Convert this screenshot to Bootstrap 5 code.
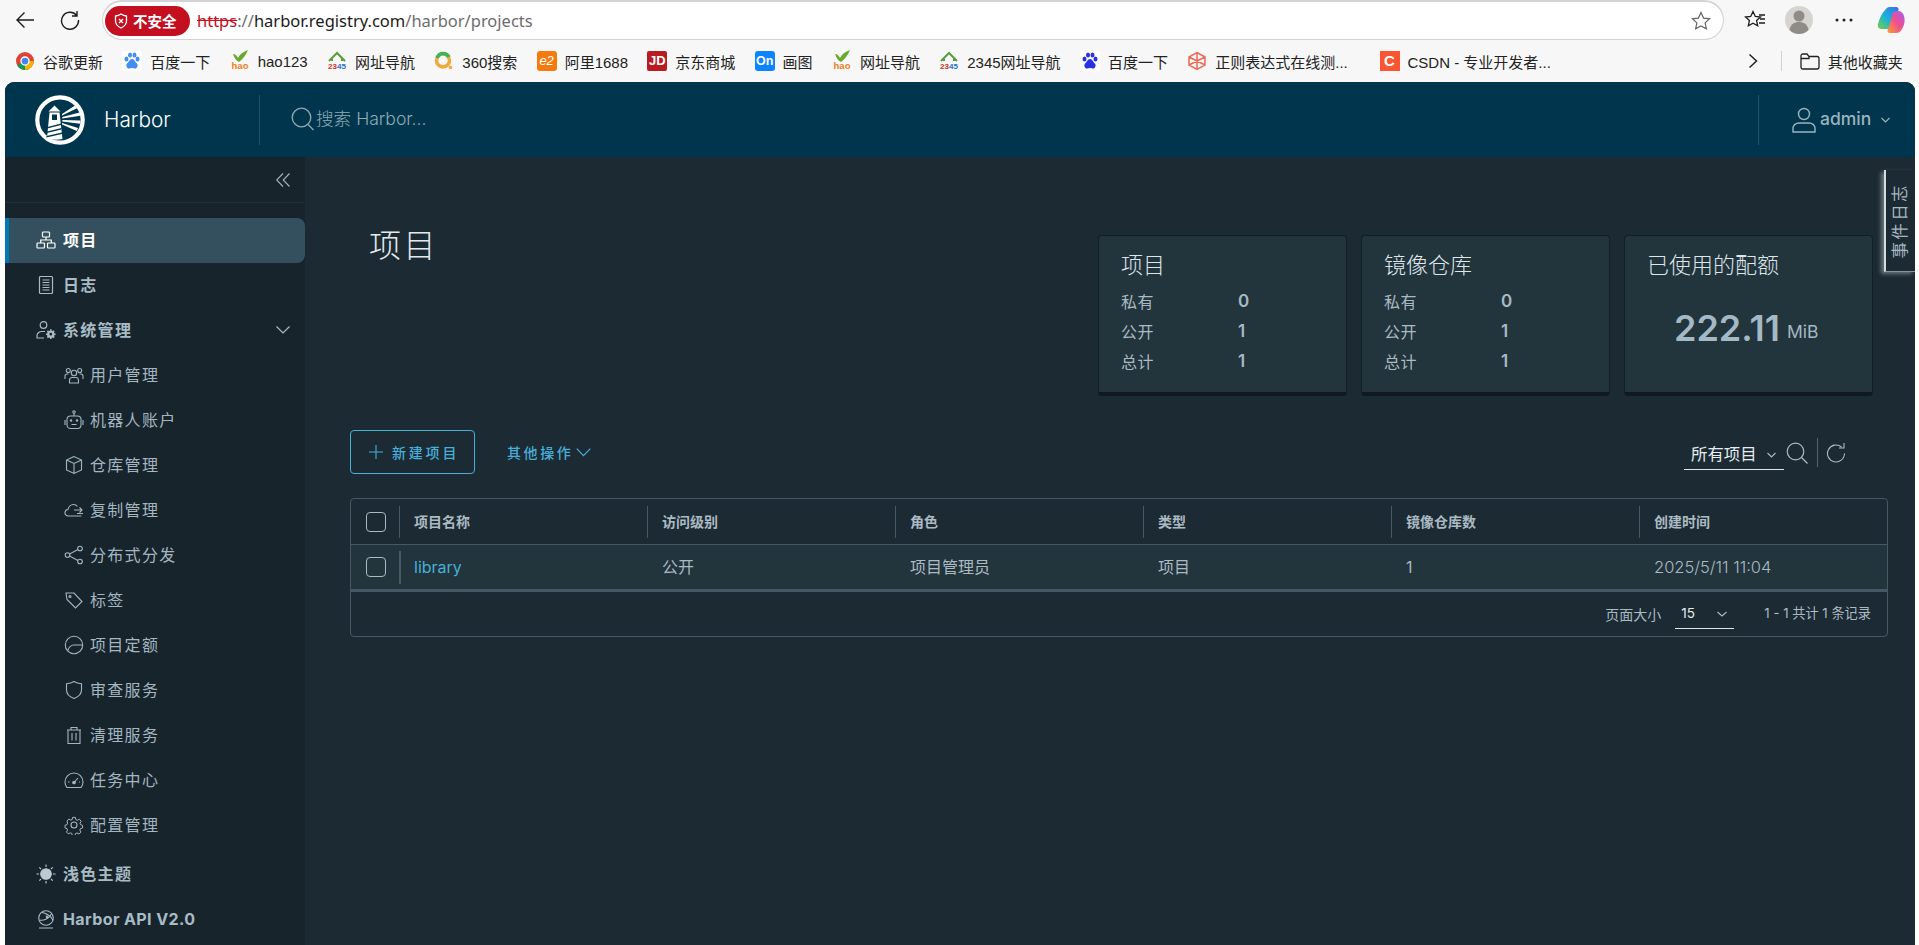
<!DOCTYPE html>
<html lang="zh-CN">
<head>
<meta charset="utf-8">
<title>Harbor</title>
<link href="https://cdn.jsdelivr.net/npm/bootstrap@5.3.0/dist/css/bootstrap.min.css" rel="stylesheet">
<style>
html,body{height:945px;overflow:hidden;background:#fff}
body{font-family:"Inter","Noto Sans CJK SC",sans-serif;color:#acbac3;font-size:16px}
svg{display:block;flex:none}
.chrome-top{height:40px;background:#f7f7f7;padding-left:15px;color:#222}
.nav-ic{width:20px;height:20px;margin-right:25px}
.addr{position:relative;height:40px;width:1622px;background:#fff;border:1px solid #d3d3d3;border-top-width:2px;border-radius:20px;padding-left:2px;font:16.5px "Noto Sans","Noto Sans CJK SC",sans-serif}
.pill{width:85px;height:30px;background:#c30f1f;color:#fff;border-radius:15px;font-weight:700;font-size:14.5px;padding-left:9px;gap:5px;margin-right:7px;white-space:nowrap}
.u-red{color:#c30f1f;text-decoration:line-through}
.u-g{color:#6d6d6d}
.u-d{color:#1b1b1b}
.star{margin-left:auto;margin-right:12px}
.chrome-right{gap:0;color:#222}
.bm-bar{height:42px;background:#f7f7f7;padding-left:16px;font:15px "Liberation Sans","Noto Sans CJK SC",sans-serif;color:#222;white-space:nowrap}
.bm{gap:8px;margin-right:19.3px}
.fav{width:20px;height:20px;flex:none;font:700 11px/20px "Liberation Sans",sans-serif;text-align:center;color:#fff;border-radius:2px}
.app{height:863px;margin:0 4px 0 5px;border-radius:9px 9px 0 0;overflow:hidden;background:#1b2a33;position:relative}
.app-head{height:75px;background:#00364d;padding:0}
.brand{width:255px;padding-left:30px;gap:19px;color:#fff;font-size:20.8px;font-weight:300;height:50px;border-right:1px solid #21536a}
.hsearch{padding-left:31px;gap:1px;color:#8fa9b4;font-size:17.6px;font-weight:300}
.usr{width:157px;height:50px;margin-left:auto;border-left:1px solid #21536a;padding-left:33px;color:#9cb3be;gap:4px;font-size:17.5px;font-weight:500}
.side{width:300px;flex:none;background:#17242c;height:788px}
.collapse-row{height:46px;border-bottom:1px solid #1f2e38;padding-right:15px;color:#a4b5be}
.side .nav{padding-top:15px}
.side .nav-link{height:45px;display:flex;align-items:center;padding:0 0 2px 31px;color:#a9bbc5;font-size:16px;font-weight:700;letter-spacing:1.3px;gap:7px;border-radius:0 8px 8px 0}
.side .nav-link.act{background:#34505f;color:#fff;border-left:4px solid #0079b8;padding-left:27px}
.side .nav-link.subi{padding-left:59px;font-weight:400;gap:6px;color:#a4b6c0}
.side .nav-link svg{width:20px;height:20px}
.side .gap5{margin-top:4px}
.side .chev{margin-left:auto;margin-right:15px;width:14px!important;height:14px!important}
.mainc{flex:1;padding:78px 27px 0 45px;position:relative;background:#1b2a33}
.top-row{height:161px;margin-bottom:34px}
.page-h{font-size:32px;font-weight:300;color:#e3e9ed;margin:-12px 0 0 19px;letter-spacing:2.5px;line-height:46px}
.stats{gap:14px;margin-right:15px}
.stat{width:249px;height:161px;background:#22343c;border:1px solid #131f27;border-bottom:4px solid #10191f;border-radius:4px;padding:13px 22px;color:#acbac3}
.stat-t{font-size:22px;font-weight:300;color:#dfe6ea;line-height:32px;margin-bottom:6px;white-space:nowrap}
.stat-r{height:30px;font-size:16px;letter-spacing:.6px}
.stat-r span:first-child{width:117px}
.stat-r b{font-weight:600;color:#a9bac4;font-size:17px}
.bigv{margin-top:14px;padding-left:27px;color:#a5b8c5;font-weight:600;font-size:36px;gap:7px;white-space:nowrap}
.bigv small{font-size:17.5px;font-weight:400;position:relative;top:4px}
.toolbar{height:44px;margin-bottom:24px}
.btn-new{width:125px;height:44px;padding:0 0 0 18px;border:1px solid #49afd9;color:#49afd9;border-radius:4px;font-size:14px;letter-spacing:2.8px;font-weight:500;gap:9px;display:flex;align-items:center}
.btn-more{padding:0;margin-left:32px;color:#49afd9;font-size:14px;letter-spacing:2.6px;font-weight:500;gap:3px;display:flex;align-items:center;border:0}
.filter{margin-left:auto;margin-right:43px;color:#acbac3}
.fsel{width:100px;height:29px;margin-top:6px;border-bottom:1px solid #dfe6ea;color:#e6ecef;font-size:16.4px;padding-left:7px;gap:10px}
.fsep{width:1px;height:29px;background:#56646f;margin:0 8px 0 9px}
.dg{border:1px solid #485764;border-radius:4px}
.dg-row{display:grid;grid-template-columns:48px repeat(5,248px) 1fr;align-items:center}
.dg-h{height:46px;border-bottom:1px solid #485764;font-size:14px;font-weight:700;color:#acbac3}
.dg-b{height:47px;background:#22343c;border-bottom:3px solid #485764;color:#acbac3;font-size:16px;font-weight:300}
.dg-f{height:44px;font-size:13.2px;color:#acbac3;padding-right:16px}
.dg-f>span:first-child{font-size:14px}
.cell{height:32px;display:flex;align-items:center;padding-left:14px;border-left:1px solid #485764;white-space:nowrap}
.cell.nb{border-left:0;padding-left:15px;font-weight:400}
.cell.dt{font-size:16.5px;font-weight:300}
.dg-b .cell.first{border-left:2px solid #485764;height:33px;padding-left:13px}
.form-check-input.cb{width:20px;height:20px;margin:0 0 0 15px;background-color:transparent;border:1px solid #acbac3;border-radius:4px}
.lnk{color:#49afd9;text-decoration:none;font-weight:400}
.psel{width:59px;height:30px;border-bottom:1px solid #dfe6ea;margin:0 30px 0 14px;color:#e6ecef;padding-left:6px;justify-content:space-between;padding-right:7px;font-size:13.5px}
.evt{position:absolute;right:0;top:13px;width:31px;height:102px;background:#1b2a33;border-left:2px solid #d5dbdf;border-bottom:1px solid #8a969c;box-shadow:-3px 2px 4px rgba(200,210,215,.45);display:flex;align-items:center;justify-content:center;color:#a8b8c1;font-size:16.5px;letter-spacing:2.4px}
.evt span{writing-mode:vertical-rl;text-orientation:sideways;transform:rotate(180deg);white-space:nowrap}
</style>
</head>
<body>
<div class="chrome-top d-flex align-items-center">
  <svg class="nav-ic" viewBox="0 0 20 20" fill="none" stroke="#1d1d1d" stroke-width="1.4"><path d="M19 10H2M9.5 2.5 2 10l7.5 7.5"/></svg>
  <svg class="nav-ic" style="margin-right:22px" viewBox="0 0 20 20" fill="none" stroke="#1d1d1d" stroke-width="1.4"><path d="M16.5 5.2A8.5 8.5 0 1 0 18.5 10M17 1v5h-5"/></svg>
  <div class="addr d-flex align-items-center">
    <div class="pill d-flex align-items-center"><svg width="14" height="16" viewBox="0 0 14 16" fill="none" stroke="#fff" stroke-width="1.3"><path d="M7 1c2 1.300 3.500 1.800 5.500 2v5c0 3.200-2.200 5.500-5.500 7-3.300-1.500-5.500-3.800-5.500-7V3C3.500 2.800 5 2.300 7 1z"/><path d="m5 6 4 4M9 6l-4 4"/></svg><span>不安全</span></div>
    <span class="u-red">https</span><span class="u-g">://</span><span class="u-d">harbor.registry.com</span><span class="u-g">/harbor/projects</span>
    <svg class="star" width="20" height="20" viewBox="0 0 20 20" fill="none" stroke="#666" stroke-width="1.200"><path d="m10 1.500 2.600 5.600 6 .7-4.500 4.100 1.300 6L10 15l-5.400 2.900 1.300-6L1.400 7.800l6-.7z"/></svg>
  </div>
  <div class="chrome-right d-flex align-items-center">
    <svg style="margin-left:20px" width="22" height="20" viewBox="0 0 22 20" fill="none" stroke="#1d1d1d" stroke-width="1.300"><path d="m9 1.500 2.300 5 5.200.5-3.900 3.600 1.100 5.200L9 13.200l-4.700 2.600 1.100-5.200L1.500 7l5.200-.5z"/><path d="M15 5h6M16 9h5M15 13h6"/></svg>
    <svg style="margin-left:19px" width="28" height="28" viewBox="0 0 28 28"><circle cx="14" cy="14" r="14" fill="#d6d4d0"/><circle cx="14" cy="10" r="5.500" fill="#8f8b87"/><path d="M4.500 24c1-6 5-8 9.500-8s8.500 2 9.500 8c-2.500 2.500-6 4-9.500 4s-7-1.500-9.500-4z" fill="#8f8b87"/></svg>
    <svg style="margin-left:22px" width="18" height="4" viewBox="0 0 18 4" fill="#222"><circle cx="2" cy="2" r="1.500"/><circle cx="9" cy="2" r="1.500"/><circle cx="16" cy="2" r="1.500"/></svg>
    <svg style="margin-left:24px" width="28" height="28" viewBox="0 0 28 28"><defs><linearGradient id="cpa" x1="0" y1="1" x2="1" y2="0"><stop offset="0" stop-color="#7fcf3a"/><stop offset=".45" stop-color="#18b4d8"/><stop offset="1" stop-color="#3a6df0"/></linearGradient><linearGradient id="cpb" x1="0" y1="1" x2="1" y2="0"><stop offset="0" stop-color="#f7a030"/><stop offset=".5" stop-color="#f0508c"/><stop offset="1" stop-color="#a65cf0"/></linearGradient></defs><path d="M9 3c1-1.500 2.500-2 4-2h6c2 0 3 1.500 2.500 3L16 20c-.6 1.800-2 3-4 3H5c-3 0-5-2-4-5 1.500-5 3-10 8-15z" fill="url(#cpa)"/><path d="M21 5c3 0 5 1.500 6 5 1 4 1 8-2 13-1.500 2.500-3 4-6 4h-6c-2.500 0-3-2-2-4l5-16c.5-1.500 2.500-2 5-2z" fill="url(#cpb)"/></svg>
  </div>
</div>
<div class="bm-bar d-flex align-items-center">
  <div class="bm d-flex align-items-center"><svg width="18" height="18" viewBox="0 0 20 20"><circle cx="10" cy="10" r="10" fill="#db4437"/><path d="M10 10 1.300 15A10 10 0 0 0 14 19.200z" fill="#0f9d58"/><path d="M10 10h9.800A10 10 0 0 1 10 20z" fill="#f4b400"/><circle cx="10" cy="10" r="4.500" fill="#4285f4" stroke="#fff" stroke-width="1.500"/></svg><span style="margin-left:1px">谷歌更新</span></div>
  <div class="bm d-flex align-items-center"><svg class="fav" style="background:#fff" viewBox="0 0 20 20" fill="#3f8ef0"><ellipse cx="4.500" cy="8" rx="2" ry="2.600"/><ellipse cx="8" cy="4" rx="2" ry="2.600"/><ellipse cx="12.500" cy="4" rx="2" ry="2.600"/><ellipse cx="15.500" cy="8" rx="2" ry="2.600"/><path d="M10 8c2.500 0 3 3 5 4.500 1.500 2 0 5.500-2.500 5-1-.2-2-.5-2.500-.5s-1.500.3-2.500.5C5 18 3.500 14.500 5 12.500 7 11 7.500 8 10 8z"/></svg><span>百度一下</span></div>
  <div class="bm d-flex align-items-center"><svg class="fav" viewBox="0 0 20 24" style="height:24px;margin:-2px 0"><path d="M3 5c2 0 4 2 5 4 2-4 5-6 10-8-2 5-5 9-9 12C7 12 4 9 3 5z" fill="#6aa82e"/><text x="10" y="20" font-size="9.500" font-family="Liberation Sans" text-anchor="middle" fill="#ee7d23">hao</text></svg><span>hao123</span></div>
  <div class="bm d-flex align-items-center"><svg class="fav" viewBox="0 0 20 20"><path d="M2 10 10 2l8 8M5 10V8M15 10V7" fill="none" stroke="#5b9e3d" stroke-width="2"/><text x="10" y="17.500" font-size="8" font-weight="700" font-family="Liberation Sans" text-anchor="middle"><tspan fill="#d0312d">23</tspan><tspan fill="#2f6fc4">45</tspan></text></svg><span>网址导航</span></div>
  <div class="bm d-flex align-items-center"><svg class="fav" viewBox="0 0 20 20" fill="none"><circle cx="9" cy="9.500" r="6.500" stroke="#f2a93b" stroke-width="3.500"/><path d="M3 7a6.500 6.500 0 0 1 12-1" stroke="#3fb45f" stroke-width="3.500"/><circle cx="16.500" cy="16.500" r="1.800" fill="#f2a93b"/></svg><span>360搜索</span></div>
  <div class="bm d-flex align-items-center"><div class="fav" style="background:#f57a0e;font-style:italic;font-weight:400;font-size:13px;border-radius:3px">e2</div><span>阿里1688</span></div>
  <div class="bm d-flex align-items-center"><div class="fav" style="background:#b81c22;font-size:13px">JD</div><span>京东商城</span></div>
  <div class="bm d-flex align-items-center"><div class="fav" style="background:#0a84ff;font-size:12.500px;border-radius:3px">On</div><span>画图</span></div>
  <div class="bm d-flex align-items-center"><svg class="fav" viewBox="0 0 20 24" style="height:24px;margin:-2px 0"><path d="M3 5c2 0 4 2 5 4 2-4 5-6 10-8-2 5-5 9-9 12C7 12 4 9 3 5z" fill="#6aa82e"/><text x="10" y="20" font-size="9.500" font-family="Liberation Sans" text-anchor="middle" fill="#ee7d23">hao</text></svg><span>网址导航</span></div>
  <div class="bm d-flex align-items-center"><svg class="fav" viewBox="0 0 20 20"><path d="M2 10 10 2l8 8M5 10V8M15 10V7" fill="none" stroke="#5b9e3d" stroke-width="2"/><text x="10" y="17.500" font-size="8" font-weight="700" font-family="Liberation Sans" text-anchor="middle"><tspan fill="#d0312d">23</tspan><tspan fill="#2f6fc4">45</tspan></text></svg><span>2345网址导航</span></div>
  <div class="bm d-flex align-items-center"><svg class="fav" style="background:#fff" viewBox="0 0 20 20" fill="#2932e1"><ellipse cx="4.500" cy="8" rx="2" ry="2.600"/><ellipse cx="8" cy="4" rx="2" ry="2.600"/><ellipse cx="12.500" cy="4" rx="2" ry="2.600"/><ellipse cx="15.500" cy="8" rx="2" ry="2.600"/><path d="M10 8c2.500 0 3 3 5 4.500 1.500 2 0 5.500-2.500 5-1-.2-2-.5-2.500-.5s-1.500.3-2.500.5C5 18 3.500 14.500 5 12.500 7 11 7.500 8 10 8z"/></svg><span>百度一下</span></div>
  <div class="bm d-flex align-items-center"><svg class="fav" viewBox="0 0 20 20" fill="none" stroke="#ee6a55" stroke-width="1.500"><path d="M10 1.500 18 6v8l-8 4.500L2 14V6zM2 6l16 8M18 6 2 14M10 1.500v17"/></svg><span style="width:131px">正则表达式在线测...</span></div>
  <div class="bm d-flex align-items-center" style="margin-left:14px"><div class="fav" style="background:#fc5531;font-size:15px;border-radius:0">C</div><span style="width:139px">CSDN - 专业开发者...</span></div>
  <svg style="margin-left:182px" width="10" height="16" viewBox="0 0 10 16" fill="none" stroke="#222" stroke-width="1.500"><path d="m1.500 1.500 7 6.500-7 6.500"/></svg>
  <div style="width:1px;height:20px;background:#cfcfcf;margin:0 18px 0 23px"></div>
  <svg width="20" height="17" viewBox="0 0 20 17" fill="none" stroke="#222" stroke-width="1.300"><path d="M1 3c0-1 .7-2 2-2h4l2 2.500h8c1.300 0 2 1 2 2V14c0 1.200-.8 2-2 2H3c-1.300 0-2-.8-2-2zM1 5.500h8L9 3.500"/></svg>
  <span style="margin-left:8px">其他收藏夹</span>
</div>
<div class="app">
  <header class="app-head d-flex align-items-center">
    <div class="brand d-flex align-items-center">
      <svg width="50" height="50" viewBox="0 0 50 50"><circle cx="25" cy="25" r="22.700" fill="#00364d" stroke="#fff" stroke-width="4.200"/><path d="M19.500 10.500 25.500 16.500H13.500z" fill="#fff"/><path d="M14.500 17.500h10L27.500 44c-5 1-10 1-15.500-1z" fill="#fff"/><rect x="17" y="19.500" width="5" height="5.500" fill="#00364d"/><path d="M12.500 32 26 28.500v1.400L12.300 33.500zM12 36.500l14.500-3.500v1.400L11.800 38zM11.500 41l15.500-3.500v1.400L11.400 42.500z" fill="#00364d"/><path d="M27 19 40 10.500l2 2.800L27 20.600zM27.300 22 44.500 17.500l.8 3.200L27.300 23.500zM27.300 25 45.500 25.500l-.3 3.200L27.300 26.500zM27 28 43 33l-1.200 3L27 29.500z" fill="#fff"/></svg>
      <span>Harbor</span>
    </div>
    <div class="hsearch d-flex align-items-center">
      <svg width="24" height="24" viewBox="0 0 24 24" fill="none" stroke="#8fa9b4" stroke-width="1.300"><circle cx="10.500" cy="10.500" r="9.300"/><path d="m17 17.500 5.500 5.500"/></svg>
      <span>搜索 Harbor...</span>
    </div>
    <div class="usr d-flex align-items-center">
      <svg width="24" height="26" viewBox="0 0 24 26" fill="none" stroke="#9cb3be" stroke-width="1.400"><circle cx="12" cy="7" r="5.500"/><path d="M1 25v-4c0-3 3-5 6-5h10c3 0 6 2 6 5v4z"/></svg>
      <span>admin</span>
      <svg style="margin-left:6px" width="9" height="6" viewBox="0 0 9 6" fill="none" stroke="#9cb3be" stroke-width="1.200"><path d="m.5 1 4 4 4-4"/></svg>
    </div>
  </header>
  <div class="d-flex">
    <aside class="side">
      <div class="collapse-row d-flex align-items-center justify-content-end">
        <svg width="14" height="14" viewBox="0 0 14 14" fill="none" stroke="#a4b5be" stroke-width="1.100"><path d="M7 .5.700 7 7 13.500M13.500.5 7.200 7l6.300 6.500"/></svg>
      </div>
      <nav class="nav flex-column">
        <a class="nav-link act" href="#"><svg viewBox="0 0 20 20" fill="none" stroke="currentColor" stroke-width="1.200"><rect x="6.500" y="2" width="7" height="5" rx=".8"/><rect x="1" y="13" width="7.500" height="5" rx=".8"/><rect x="11.500" y="13" width="7.500" height="5" rx=".8"/><path d="M10 7v3M4.700 13v-3h10.600v3"/></svg><span>项目</span></a>
        <a class="nav-link" href="#"><svg viewBox="0 0 20 20" fill="none" stroke="currentColor" stroke-width="1.200"><rect x="3.500" y="1.500" width="13" height="17" rx="1"/><path d="M6.500 5h7M6.500 7.500h7M6.500 10h7M6.500 12.500h7M6.500 15h7"/></svg><span>日志</span></a>
        <a class="nav-link" href="#"><svg viewBox="0 0 20 20" fill="none" stroke="currentColor" stroke-width="1.200"><circle cx="7.500" cy="5" r="3.300"/><path d="M8 18H1v-2.500c0-2 2-4 5-4h3"/><circle cx="14.800" cy="14.200" r="2.600" stroke-width="2.400"/><path d="M14.800 9.300v1.500M14.800 17.600v1.500M10 14.200h1.500M18.100 14.200h1.500M11.400 10.800l1 1M17.200 16.600l1 1M11.400 17.600l1-1M17.200 11.800l1-1" stroke-width="1.600"/></svg><span>系统管理</span><svg class="chev" viewBox="0 0 14 14" fill="none" stroke="currentColor" stroke-width="1.200"><path d="m.5 3.500 6.500 6.500 6.500-6.500"/></svg></a>
        <a class="nav-link subi" href="#"><svg viewBox="0 0 20 20" fill="none" stroke="currentColor" stroke-width="1.100"><circle cx="10" cy="8" r="2.700"/><path d="M5.500 18v-2.500c0-2 1.500-3 2.500-3h4c1 0 2.500 1 2.500 3V18z"/><circle cx="4.300" cy="5.500" r="2"/><circle cx="15.700" cy="5.500" r="2"/><path d="M1 14v-2.500c0-1.500 1-2.500 2-2.500h1.500M19 14v-2.500c0-1.500-1-2.500-2-2.500h-1.500"/></svg><span>用户管理</span></a>
        <a class="nav-link subi" href="#"><svg viewBox="0 0 20 20" fill="none" stroke="currentColor" stroke-width="1.100"><rect x="3" y="6" width="14" height="12.500" rx="3.500"/><circle cx="10" cy="2" r="1.200"/><path d="M10 3v3M1 10v5M19 10v5M7.500 14.500h5"/><circle cx="7" cy="10.500" r=".7"/><circle cx="13" cy="10.500" r=".7"/></svg><span>机器人账户</span></a>
        <a class="nav-link subi" href="#"><svg viewBox="0 0 20 20" fill="none" stroke="currentColor" stroke-width="1.100"><path d="M10 1.500 2.500 5v10L10 18.500l7.500-3.500V5zM2.500 5 10 8.500 17.500 5M10 8.500v10"/></svg><span>仓库管理</span></a>
        <a class="nav-link subi" href="#"><svg viewBox="0 0 20 20" fill="none" stroke="currentColor" stroke-width="1.100"><path d="M17.500 16H4.500C2 16 .8 14.200 1 12.500 1.200 10.800 2.500 9.500 4 9.500 4.500 6.500 7 4.500 9.500 4.500c1.500 0 3 .7 4 2"/><path d="M10 10h8M15.500 7.500 18 10l-2.500 2.500M13 13.500h6"/></svg><span>复制管理</span></a>
        <a class="nav-link subi" href="#"><svg viewBox="0 0 20 20" fill="none" stroke="currentColor" stroke-width="1.100"><circle cx="16" cy="3.500" r="2.300"/><circle cx="3.500" cy="10" r="2.300"/><circle cx="16" cy="16.500" r="2.300"/><path d="m5.600 9 8.300-4.400M5.600 11l8.300 4.400"/></svg><span>分布式分发</span></a>
        <a class="nav-link subi" href="#"><svg viewBox="0 0 20 20" fill="none" stroke="currentColor" stroke-width="1.100"><path d="M2 3h8l8 8.500-6.500 6.500L3 9.500z"/><circle cx="6" cy="6.500" r="1"/></svg><span>标签</span></a>
        <a class="nav-link subi" href="#"><svg viewBox="0 0 20 20" fill="none" stroke="currentColor" stroke-width="1.100"><circle cx="10" cy="10" r="8.700"/><path d="M3.500 15.800C5 12.500 7 10 9.500 10h9.200"/></svg><span>项目定额</span></a>
        <a class="nav-link subi" href="#"><svg viewBox="0 0 20 20" fill="none" stroke="currentColor" stroke-width="1.100"><path d="M10 1.500c2.500 1.500 5 2 7.500 2.300V10c0 4-3 6.800-7.500 8.500C5.500 16.800 2.500 14 2.500 10V3.800C5 3.500 7.500 3 10 1.500z"/></svg><span>审查服务</span></a>
        <a class="nav-link subi" href="#"><svg viewBox="0 0 20 20" fill="none" stroke="currentColor" stroke-width="1.100"><path d="M3 5h14M7 5V2.500h6V5M4 5v13.500h12V5M8 8v7.500M12 8v7.500"/></svg><span>清理服务</span></a>
        <a class="nav-link subi" href="#"><svg viewBox="0 0 20 20" fill="none" stroke="currentColor" stroke-width="1.100"><path d="M3 17.500C1.500 16 1 14 1 12a9 9 0 0 1 18 0c0 2-.5 4-2 5.500z"/><circle cx="10" cy="12.500" r="1.300" fill="currentColor"/><path d="m10.500 12 3.500-4M4 12h1.500M15 12h1"/></svg><span>任务中心</span></a>
        <a class="nav-link subi" href="#"><svg viewBox="0 0 20 20" fill="none" stroke="currentColor" stroke-width="1.100"><circle cx="10" cy="10" r="3"/><path d="M8.500 1.500h3l.5 2.500 1.700.8 2.300-1.200 2 2.200-1.300 2.200.6 1.700 2.200.7v3l-2.400.7-.6 1.600 1.200 2.200-2.100 2.100-2.200-1.200-1.700.7-.6 2.200h-3l-.6-2.400-1.600-.6-2.200 1.200-2-2.100 1.100-2.100-.6-1.700-2.200-.7v-3l2.300-.7.6-1.700L2.200 5.600l2-2.200 2.200 1.200 1.600-.7z" transform="translate(1 1) scale(.9)"/></svg><span>配置管理</span></a>
        <a class="nav-link gap5" href="#"><svg viewBox="0 0 20 20" fill="#bccbd3" stroke="#bccbd3" stroke-width="1.100"><circle cx="10" cy="10" r="5.300"/><path d="M10 .5v2.500M10 17v2.500M.5 10H3M17 10h2.500M3.300 3.300 5 5M15 15l1.700 1.700M3.300 16.700 5 15M15 5l1.700-1.700"/></svg><span>浅色主题</span></a>
        <a class="nav-link" href="#"><svg viewBox="0 0 20 20" fill="none" stroke="currentColor" stroke-width="1.100"><circle cx="10" cy="9" r="7.300"/><path d="M3.500 11c4 1 9-1 12-6M6 3.500c3 .5 9 3 11 8M3 19h14"/><circle cx="11" cy="7.800" r=".8"/></svg><span style="letter-spacing:.4px">Harbor API V2.0</span></a>
      </nav>
    </aside>
    <main class="mainc">
      <div class="evt"><span>事件日志</span></div>
      <div class="top-row d-flex justify-content-between">
        <h1 class="page-h">项目</h1>
        <div class="stats d-flex">
          <div class="card stat"><div class="stat-t">项目</div>
            <div class="stat-r d-flex align-items-center"><span>私有</span><b>0</b></div>
            <div class="stat-r d-flex align-items-center"><span>公开</span><b>1</b></div>
            <div class="stat-r d-flex align-items-center"><span>总计</span><b>1</b></div></div>
          <div class="card stat"><div class="stat-t">镜像仓库</div>
            <div class="stat-r d-flex align-items-center"><span>私有</span><b>0</b></div>
            <div class="stat-r d-flex align-items-center"><span>公开</span><b>1</b></div>
            <div class="stat-r d-flex align-items-center"><span>总计</span><b>1</b></div></div>
          <div class="card stat"><div class="stat-t">已使用的配额</div>
            <div class="bigv d-flex align-items-center"><span>222.11</span><small>MiB</small></div></div>
        </div>
      </div>
      <div class="toolbar d-flex align-items-center">
        <button type="button" class="btn btn-new"><svg width="14" height="14" viewBox="0 0 14 14" stroke="#49afd9" stroke-width="1.100"><path d="M7 0v14M0 7h14"/></svg><span>新建项目</span></button>
        <button type="button" class="btn btn-more"><span>其他操作</span><svg width="15" height="9" viewBox="0 0 15 9" fill="none" stroke="#49afd9" stroke-width="1.200"><path d="m.7.7 6.800 7 6.800-7"/></svg></button>
        <div class="filter d-flex align-items-center">
          <div class="fsel d-flex align-items-center"><span>所有项目</span><svg width="9" height="6" viewBox="0 0 9 6" fill="none" stroke="#acbac3" stroke-width="1.100"><path d="m.5 1 4 4 4-4"/></svg></div>
          <svg style="margin-left:2px;margin-top:2px" width="22" height="22" viewBox="0 0 22 22" fill="none" stroke="#acbac3" stroke-width="1.200"><circle cx="9.500" cy="9.500" r="8.300"/><path d="m15.500 15.500 6 6"/></svg>
          <div class="fsep"></div>
          <svg width="19" height="21" viewBox="0 0 19 21" fill="none" stroke="#acbac3" stroke-width="1.100"><path d="M15.500 5a8.500 8.500 0 1 0 3 6.500M18 1v5h-5"/></svg>
        </div>
      </div>
      <div class="dg">
        <div class="dg-row dg-h">
          <input class="form-check-input cb" type="checkbox" aria-label="全选">
          <div class="cell">项目名称</div><div class="cell">访问级别</div><div class="cell">角色</div><div class="cell">类型</div><div class="cell">镜像仓库数</div><div class="cell">创建时间</div>
        </div>
        <div class="dg-row dg-b">
          <input class="form-check-input cb" type="checkbox" aria-label="选择">
          <div class="cell first"><a class="lnk" href="#">library</a></div><div class="cell nb">公开</div><div class="cell nb">项目管理员</div><div class="cell nb">项目</div><div class="cell nb">1</div><div class="cell nb dt">2025/5/11 11:04</div>
        </div>
        <div class="dg-f d-flex align-items-center justify-content-end">
          <span>页面大小</span>
          <div class="psel d-flex align-items-center"><span>15</span><svg width="10" height="6" viewBox="0 0 10 6" fill="none" stroke="#acbac3" stroke-width="1.100"><path d="m.5 1 4.500 4 4.500-4"/></svg></div>
          <span>1 - 1 共计 1 条记录</span>
        </div>
      </div>
    </main>
  </div>
</div>
<script src="https://cdn.jsdelivr.net/npm/bootstrap@5.3.0/dist/js/bootstrap.bundle.min.js"></script>
</body>
</html>
